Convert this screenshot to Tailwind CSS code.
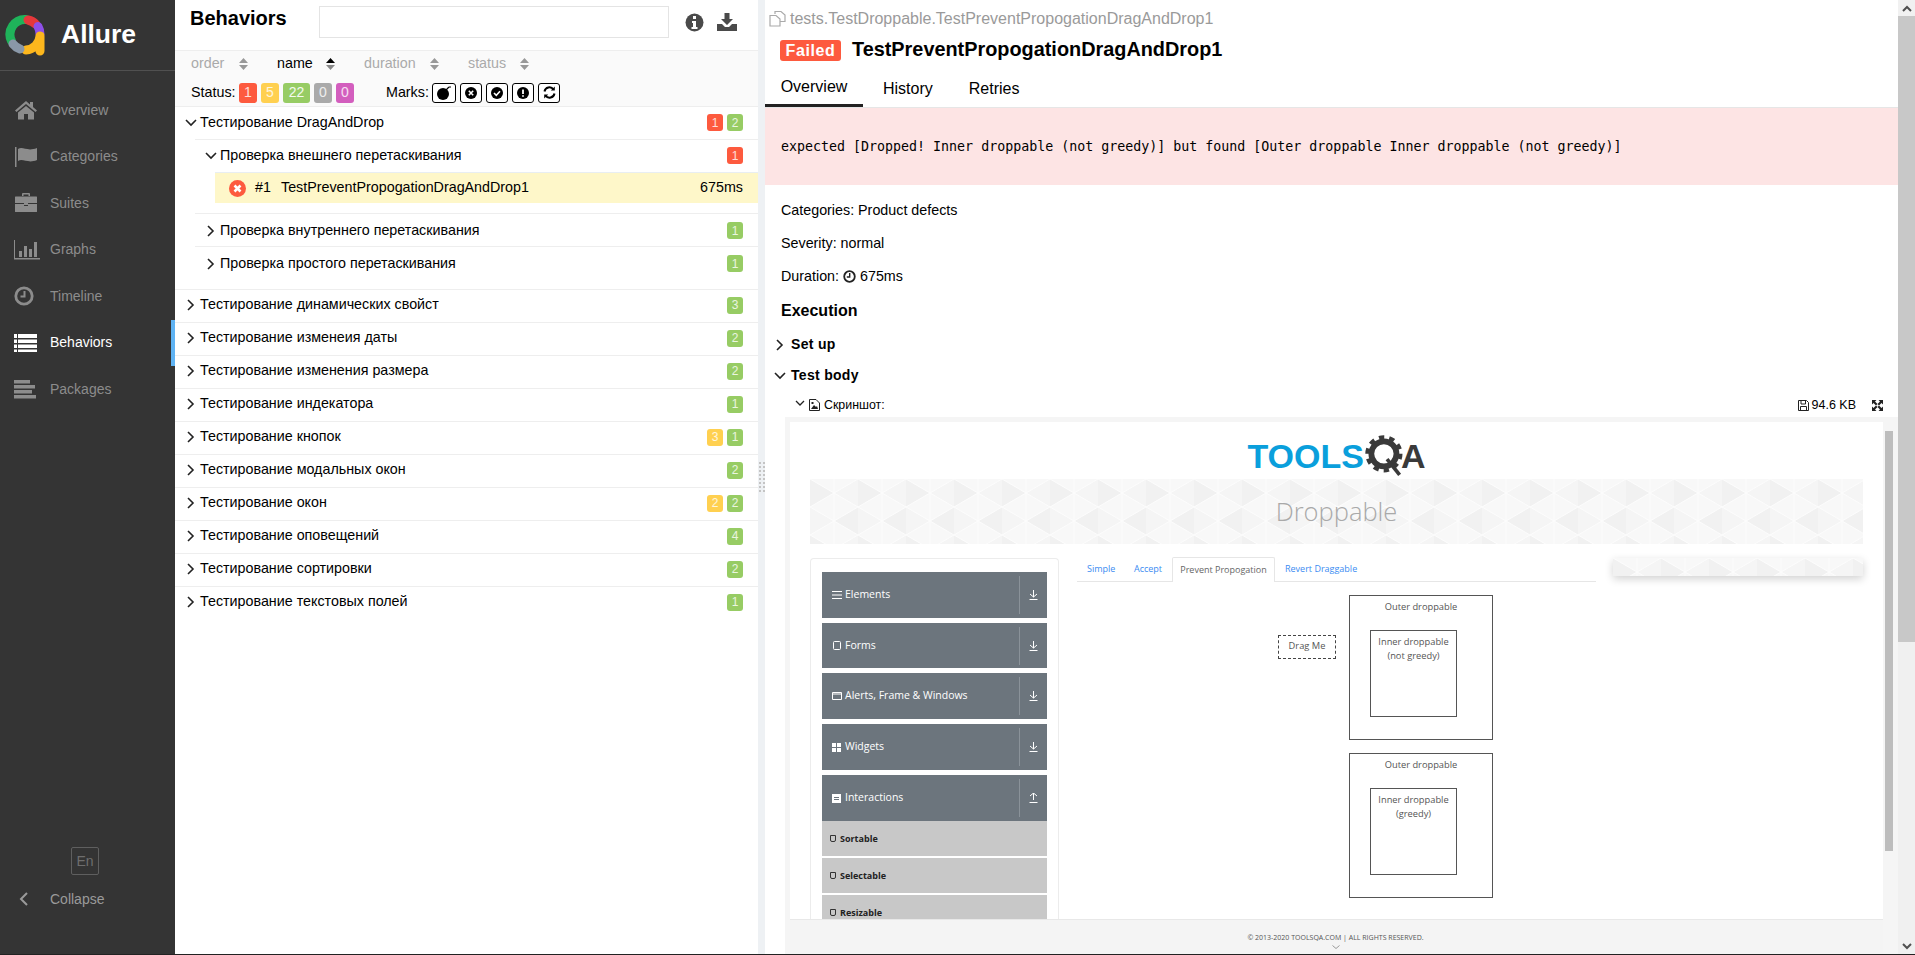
<!DOCTYPE html>
<html lang="en">

<head>
    <title>Allure Report - Behaviors</title>
    <meta charset="UTF-8">
    <meta name="viewport" content="width=device-width, initial-scale=1.0">
    <script src="https://cdn.jsdelivr.net/npm/@tailwindcss/browser@4"></script>
</head>

<body class="h-[955px] w-[1915px] overflow-hidden bg-white font-['Liberation_Sans',Arial,sans-serif] text-[14px] text-black">
    <div class="flex h-[954px]">

        <!-- side nav -->
        <nav class="flex h-full w-[175px] shrink-0 flex-col bg-[#343434]">
            <div class="flex h-[71px] shrink-0 items-center border-b border-[#505050] pl-[5px]">
                <svg width="40" height="42" viewBox="0 0 40 42" class="mt-[-1px]" fill="none" stroke-width="9" stroke-linecap="round">
                    <path d="M6.500 27 A15 15 0 0 1 21 5.500" stroke="#1fb35a"/>
                    <path d="M23 6 A15 15 0 0 1 31 10.500" stroke="#e5383b"/>
                    <path d="M33 12.500 A15 15 0 0 1 35 20" stroke="#8e4fe8"/>
                    <path d="M21 36 A15 15 0 0 0 35 22 L35 37" stroke="#fdb71d" stroke-linejoin="round"/>
                    <path d="M8 30 A15 15 0 0 0 15 35" stroke="#8a98a8"/>
                </svg>
                <span class="ml-[16px] text-[26.5px] font-bold text-white">Allure</span>
            </div>

            <ul class="mt-[16px] flex flex-col text-[14px] text-[#8c8c8c]">
                <li class="flex h-[46.5px] items-center">
                    <svg width="24" height="20" viewBox="0 0 24 20" class="ml-[14px]" fill="#8c8c8c"><path d="M12 1 L1 10.500 L2.500 12 L12 4 L21.500 12 L23 10.500 L19 7 V2 H16 V4.500 Z M4 12.500 V19.500 H10 V14 H14 V19.500 H20 V12.500 L12 6 Z"/></svg>
                    <span class="ml-[12px]">Overview</span>
                </li>
                <li class="flex h-[46.5px] items-center">
                    <svg width="24" height="20" viewBox="0 0 24 20" class="ml-[14px]" fill="#8c8c8c"><path d="M1 0 H2.500 V20 H1 Z M4 2 C9 -1 13 5 23 1 V13 C14 17 9 11 4 14 Z"/></svg>
                    <span class="ml-[12px]">Categories</span>
                </li>
                <li class="flex h-[46.5px] items-center">
                    <svg width="24" height="20" viewBox="0 0 24 20" class="ml-[14px]" fill="#8c8c8c"><path d="M8 3 V1 Q8 0 9 0 H15 Q16 0 16 1 V3 H14.500 V1.500 H9.500 V3 Z M1.500 3.500 H22.500 Q23 3.500 23 4 V10 H14 V12 H10 V10 H1 V4 Q1 3.500 1.500 3.500 Z M1 11 H10 V13 H14 V11 H23 V18.500 Q23 19 22.500 19 H1.500 Q1 19 1 18.500 Z"/></svg>
                    <span class="ml-[12px]">Suites</span>
                </li>
                <li class="flex h-[46.5px] items-center">
                    <svg width="26" height="20" viewBox="0 0 26 20" class="ml-[14px]" fill="#8c8c8c"><path d="M0 0 H1 V18 H26 V19.500 H0 Z M5 11 H8 V17 H5 Z M10 6 H13 V17 H10 Z M15 9 H18 V17 H15 Z M20 2 H23 V17 H20 Z"/></svg>
                    <span class="ml-[10px]">Graphs</span>
                </li>
                <li class="flex h-[46.5px] items-center">
                    <svg width="24" height="20" viewBox="0 0 24 20" class="ml-[13px]" fill="none" stroke="#8c8c8c"><circle cx="11" cy="10" r="8.200" stroke-width="2.800"/><path d="M11.500 5 V10.500 H7.500" stroke-width="2"/></svg>
                    <span class="ml-[13px]">Timeline</span>
                </li>
                <li class="flex h-[46.5px] items-center border-r-[4px] border-[#5fb3f3] text-white">
                    <svg width="24" height="20" viewBox="0 0 24 20" class="ml-[14px]" fill="#ffffff"><path d="M0 1 H3 V5 H0 Z M4 1 H23 V5 H4 Z M0 6.500 H3 V10 H0 Z M4 6.500 H23 V10 H4 Z M0 11.500 H3 V15 H0 Z M4 11.500 H23 V15 H4 Z M0 16.500 H3 V19 H0 Z M4 16.500 H23 V19 H4 Z"/></svg>
                    <span class="ml-[12px]">Behaviors</span>
                </li>
                <li class="flex h-[46.5px] items-center">
                    <svg width="24" height="20" viewBox="0 0 24 20" class="ml-[14px]" fill="#8c8c8c"><path d="M0 1 H16 V4.500 H0 Z M0 6 H21 V9.500 H0 Z M0 11 H18 V14.500 H0 Z M0 16 H22 V19.500 H0 Z"/></svg>
                    <span class="ml-[12px]">Packages</span>
                </li>
            </ul>

            <div class="mt-auto flex flex-col pb-[45px]">
                <div class="ml-[71px] flex h-[28px] w-[28px] items-center justify-center rounded-[2px] border border-[#5f5f5f] text-[14px] text-[#6e6e6e]">En</div>
                <div class="mt-[14px] flex h-[20px] items-center text-[14px] text-[#9a9a9a]">
                    <svg width="10" height="14" viewBox="0 0 10 14" class="ml-[19px]" fill="none" stroke="#9a9a9a" stroke-width="2"><path d="M8 1 L2 7 L8 13"/></svg>
                    <span class="ml-[21px]">Collapse</span>
                </div>
            </div>
        </nav>

        <!-- left pane: tree -->
        <section class="flex h-full w-[583px] shrink-0 flex-col">
            <div class="flex h-[51px] shrink-0 items-start border-b border-[#eeeeee] pl-[15px]">
                <h2 class="mt-[6px] w-[129px] text-[20px] font-bold leading-[24px]">Behaviors</h2>
                <div class="mt-[6px] h-[32px] w-[350px] border border-[#e4e4e4]"></div>
                <svg width="19" height="19" viewBox="0 0 19 19" class="ml-[16px] mt-[13px]"><circle cx="9.500" cy="9.500" r="9" fill="#4a4a4a"/><path d="M8 3 H11 V6 H8 Z M7 8 H11 V14 H12.500 V16 H6.500 V14 H8 V10 H7 Z" fill="#fff"/></svg>
                <svg width="20" height="19" viewBox="0 0 20 19" class="ml-[13px] mt-[13px]" fill="#4a4a4a"><path d="M7.500 0 H12.500 V6 H16 L10 12 L4 6 H7.500 Z M0 11 H5 L8 14 H12 L15 11 H20 V18 H0 Z"/></svg>
            </div>

            <div class="h-[56px] shrink-0 border-b border-[#eeeeee] bg-[#fafafa] pl-[16px] text-[14.3px]">
                <div class="flex h-[26px] items-center text-[#aaaaaa]">
                    <span class="w-[48px]">order</span>
                    <svg width="9" height="12" viewBox="0 0 9 12" class="mr-[29px]" fill="#999999"><path d="M4.500 0 L9 5 H0 Z M0 7 H9 L4.500 12 Z"/></svg>
                    <span class="w-[49px] text-black">name</span>
                    <svg width="9" height="12" viewBox="0 0 9 12" class="mr-[29px]"><path d="M4.500 0 L9 5 H0 Z" fill="#000"/><path d="M0 7 H9 L4.500 12 Z" fill="#888"/></svg>
                    <span class="w-[66px]">duration</span>
                    <svg width="9" height="12" viewBox="0 0 9 12" class="mr-[29px]" fill="#999999"><path d="M4.500 0 L9 5 H0 Z M0 7 H9 L4.500 12 Z"/></svg>
                    <span class="w-[52px]">status</span>
                    <svg width="9" height="12" viewBox="0 0 9 12" fill="#999999"><path d="M4.500 0 L9 5 H0 Z M0 7 H9 L4.500 12 Z"/></svg>
                </div>
                <div class="flex h-[29px] items-center pt-[2px]">
                    <span class="w-[48px]">Status:</span>
                    <span class="flex h-[20px] w-[18px] items-center justify-center rounded-[3px] bg-[#fd5a3e] text-[14px] text-white/80">1</span>
                    <span class="ml-[4px] flex h-[20px] w-[18px] items-center justify-center rounded-[3px] bg-[#ffd050] text-[14px] text-white/80">5</span>
                    <span class="ml-[4px] flex h-[20px] w-[27px] items-center justify-center rounded-[3px] bg-[#97cc64] text-[14px] text-white/90">22</span>
                    <span class="ml-[4px] flex h-[20px] w-[18px] items-center justify-center rounded-[3px] bg-[#aaaaaa] text-[14px] text-white/80">0</span>
                    <span class="ml-[4px] flex h-[20px] w-[18px] items-center justify-center rounded-[3px] bg-[#d35ebe] text-[14px] text-white/80">0</span>
                    <span class="ml-[32px] w-[46px]">Marks:</span>
                    <span class="flex h-[20px] w-[24px] items-center justify-center rounded-[3px] border border-black bg-white">
                        <svg width="16" height="15" viewBox="0 0 16 15"><circle cx="7" cy="9" r="6" fill="#000"/><path d="M10 5 L13 2 M13 2 H15" stroke="#000" stroke-width="1.200" fill="none"/></svg>
                    </span>
                    <span class="ml-[4px] flex h-[20px] w-[22px] items-center justify-center rounded-[3px] border border-black bg-white">
                        <svg width="12" height="12" viewBox="0 0 12 12"><circle cx="6" cy="6" r="6" fill="#000"/><path d="M3.800 3.800 L8.200 8.200 M8.200 3.800 L3.800 8.200" stroke="#fff" stroke-width="1.600"/></svg>
                    </span>
                    <span class="ml-[4px] flex h-[20px] w-[22px] items-center justify-center rounded-[3px] border border-black bg-white">
                        <svg width="12" height="12" viewBox="0 0 12 12"><circle cx="6" cy="6" r="6" fill="#000"/><path d="M3 6 L5.300 8.300 L9 4.300" stroke="#fff" stroke-width="1.600" fill="none"/></svg>
                    </span>
                    <span class="ml-[4px] flex h-[20px] w-[22px] items-center justify-center rounded-[3px] border border-black bg-white">
                        <svg width="12" height="12" viewBox="0 0 12 12"><circle cx="6" cy="6" r="6" fill="#000"/><path d="M6 2.500 V7 M6 8.200 V9.800" stroke="#fff" stroke-width="1.800"/></svg>
                    </span>
                    <span class="ml-[4px] flex h-[20px] w-[22px] items-center justify-center rounded-[3px] border border-black bg-white">
                        <svg width="13" height="13" viewBox="0 0 13 13" fill="none" stroke="#000" stroke-width="2"><path d="M1.500 5.500 A5 5 0 0 1 10.500 3.500 M11.500 7.500 A5 5 0 0 1 2.500 9.500"/><path d="M11.800 0.500 V4.500 H7.800 Z M1.200 12.500 V8.500 H5.200 Z" fill="#000" stroke="none"/></svg>
                    </span>
                </div>
            </div>

            <!-- tree rows -->
            <div class="flex flex-col text-[14.3px]">
                <div>
                    <div class="flex h-[32px] items-center pb-[1px] pr-[15px]">
                        <svg width="12" height="8" viewBox="0 0 12 8" class="ml-[10px]" fill="none" stroke="#222" stroke-width="1.600"><path d="M1 1 L6 6 L11 1"/></svg>
                        <span class="ml-[3px] flex-1">Тестирование DragAndDrop</span>
                        <span class="flex h-[17px] w-[16px] items-center justify-center rounded-[3px] bg-[#fd5a3e] text-[12px] text-white/80">1</span>
                        <span class="ml-[4px] flex h-[17px] w-[16px] items-center justify-center rounded-[3px] bg-[#97cc64] text-[12px] text-white/80">2</span>
                    </div>
                    <div class="ml-[20px] border-t border-[#eeeeee]">
                        <div class="flex h-[32px] items-center pb-[1px] pr-[15px]">
                            <svg width="12" height="8" viewBox="0 0 12 8" class="ml-[10px]" fill="none" stroke="#222" stroke-width="1.600"><path d="M1 1 L6 6 L11 1"/></svg>
                            <span class="ml-[3px] flex-1">Проверка внешнего перетаскивания</span>
                            <span class="flex h-[17px] w-[16px] items-center justify-center rounded-[3px] bg-[#fd5a3e] text-[12px] text-white/80">1</span>
                        </div>
                        <div class="ml-[20px] flex h-[31px] items-center border-t border-[#e8eef2] bg-[#fef7c9] pr-[15px]">
                            <svg width="17" height="17" viewBox="0 0 17 17" class="ml-[14px]"><circle cx="8.500" cy="8.500" r="8.500" fill="#fd5a3e"/><path d="M5.500 5.500 L11.500 11.500 M11.500 5.500 L5.500 11.500" stroke="#fff" stroke-width="2.600"/></svg>
                            <span class="ml-[9px] w-[26px]">#1</span>
                            <span class="flex-1">TestPreventPropogationDragAndDrop1</span>
                            <span>675ms</span>
                        </div>
                        <div class="h-[10px]"></div>
                        <div class="flex h-[33px] items-center border-t border-[#eeeeee] pr-[15px] pt-[1px]">
                            <svg width="8" height="12" viewBox="0 0 8 12" class="ml-[12px]" fill="none" stroke="#222" stroke-width="1.600"><path d="M1 1 L6 6 L1 11"/></svg>
                            <span class="ml-[5px] flex-1">Проверка внутреннего перетаскивания</span>
                            <span class="flex h-[17px] w-[16px] items-center justify-center rounded-[3px] bg-[#97cc64] text-[12px] text-white/80">1</span>
                        </div>
                        <div class="flex h-[33px] items-center border-t border-[#eeeeee] pr-[15px] pt-[1px]">
                            <svg width="8" height="12" viewBox="0 0 8 12" class="ml-[12px]" fill="none" stroke="#222" stroke-width="1.600"><path d="M1 1 L6 6 L1 11"/></svg>
                            <span class="ml-[5px] flex-1">Проверка простого перетаскивания</span>
                            <span class="flex h-[17px] w-[16px] items-center justify-center rounded-[3px] bg-[#97cc64] text-[12px] text-white/80">1</span>
                        </div>
                        <div class="h-[10px]"></div>
                    </div>
                </div>
                <div id="topRows"></div>
            </div>
        </section>

        <!-- splitter -->
        <div class="flex h-full w-[7px] shrink-0 items-start justify-center bg-[#eef1f4] pt-[462px]">
            <div class="grid grid-cols-2 gap-x-[2px] gap-y-[2px]">
                <i class="block size-[2px] bg-[#c4c4c4]"></i><i class="block size-[2px] bg-[#c4c4c4]"></i>
                <i class="block size-[2px] bg-[#c4c4c4]"></i><i class="block size-[2px] bg-[#c4c4c4]"></i>
                <i class="block size-[2px] bg-[#c4c4c4]"></i><i class="block size-[2px] bg-[#c4c4c4]"></i>
                <i class="block size-[2px] bg-[#c4c4c4]"></i><i class="block size-[2px] bg-[#c4c4c4]"></i>
                <i class="block size-[2px] bg-[#c4c4c4]"></i><i class="block size-[2px] bg-[#c4c4c4]"></i>
                <i class="block size-[2px] bg-[#c4c4c4]"></i><i class="block size-[2px] bg-[#c4c4c4]"></i>
                <i class="block size-[2px] bg-[#c4c4c4]"></i><i class="block size-[2px] bg-[#c4c4c4]"></i>
                <i class="block size-[2px] bg-[#c4c4c4]"></i><i class="block size-[2px] bg-[#c4c4c4]"></i>
            </div>
        </div>

        <!-- right pane: test result -->
        <main class="flex h-full min-w-0 flex-1 flex-col overflow-hidden">
            <div class="flex h-[36px] shrink-0 items-center pl-[4px] pt-[1px] text-[16px] text-[#9a9a9a]">
                <svg width="17" height="17" viewBox="0 0 17 17" fill="none" stroke="#aaaaaa" stroke-width="1.200"><path d="M6 4 V1.500 H12 L16 5 V11.500 H11"/><path d="M1 5.500 H7 L11 9 V16 H1 Z"/></svg>
                <span class="ml-[4px]">tests.TestDroppable.TestPreventPropogationDragAndDrop1</span>
            </div>
            <div class="flex h-[29px] shrink-0 items-center pl-[15px]">
                <span class="flex h-[21px] w-[61px] items-center justify-center rounded-[3px] bg-[#fd5a3e] text-[16px] font-bold tracking-[0.6px] text-white">Failed</span>
                <h1 class="mb-[2px] ml-[11px] text-[19.87px] font-bold">TestPreventPropogationDragAndDrop1</h1>
            </div>
            <div class="flex h-[43px] shrink-0 border-b border-[#e6e6e6] text-[16px]">
                <div class="flex h-[42px] w-[98px] items-center justify-center border-b-[3px] border-[#222] pt-[5px]">Overview</div>
                <div class="flex h-[42px] items-center pl-[20px] pt-[5px]">History</div>
                <div class="flex h-[42px] items-center pl-[36px] pt-[5px]">Retries</div>
            </div>
            <div class="flex h-[77px] shrink-0 items-center bg-[#fde4e4] pl-[16px] font-['DejaVu_Sans_Mono',monospace] text-[13.3px]">expected [Dropped! Inner droppable (not greedy)] but found [Outer droppable Inner droppable (not greedy)]</div>

            <div class="flex min-h-0 flex-1 flex-col text-[14.3px]">
                <div class="flex h-[34px] shrink-0 items-center pl-[16px] pt-[18px]">Categories: Product defects</div>
                <div class="mt-[16px] flex h-[17px] shrink-0 items-center pl-[16px]">Severity: normal</div>
                <div class="mt-[16px] flex h-[17px] shrink-0 items-center pl-[16px]">
                    Duration:
                    <svg width="13" height="13" viewBox="0 0 13 13" class="mx-[4px]" fill="none" stroke="#222"><circle cx="6.500" cy="6.500" r="5.300" stroke-width="1.800"/><path d="M6.700 3 V7 H3.800" stroke-width="1.400"/></svg>
                    675ms
                </div>
                <div class="mt-[16px] h-[20px] shrink-0 pl-[16px] text-[16px] font-bold leading-[20px]">Execution</div>
                <div class="mt-[13px] flex h-[20px] shrink-0 items-center text-[14px] font-bold">
                    <svg width="8" height="12" viewBox="0 0 8 12" class="ml-[11px] mt-[2px]" fill="none" stroke="#222" stroke-width="1.600"><path d="M1 1 L6 6 L1 11"/></svg>
                    <span class="ml-[7px] tracking-[0.3px]">Set up</span>
                </div>
                <div class="mt-[11px] flex h-[20px] shrink-0 items-center text-[14px] font-bold">
                    <svg width="12" height="8" viewBox="0 0 12 8" class="ml-[9px] mt-[1px]" fill="none" stroke="#222" stroke-width="1.600"><path d="M1 1 L6 6 L11 1"/></svg>
                    <span class="ml-[5px] tracking-[0.3px]">Test body</span>
                </div>
                <div class="mt-[12px] flex h-[16px] shrink-0 items-center pr-[15px] text-[12px]">
                    <svg width="10" height="7" viewBox="0 0 10 7" class="ml-[30px] mt-[-3px]" fill="none" stroke="#222" stroke-width="1.300"><path d="M1 1 L5 5 L9 1"/></svg>
                    <svg width="11" height="12" viewBox="0 0 11 12" class="ml-[4px]" fill="none" stroke="#222"><path d="M.5 .5 H7 L10.500 4 V11.500 H.5 Z"/><path d="M2 10 L5 6 L7 8 L8 7 L9 10 Z M2.500 3 H4.500 V5 H2.500 Z" fill="#222" stroke="none"/></svg>
                    <span class="ml-[3px] flex-1 pl-[1px] text-[12.4px]">Скриншот:</span>
                    <svg width="11" height="11" viewBox="0 0 11 11" fill="none" stroke="#222"><path d="M.5 .5 H8.500 L10.500 2.500 V10.500 H.5 Z M3 .5 V4 H7.500 V.5 M2.500 10.500 V6.500 H8.500 V10.500"/></svg>
                    <span class="ml-[3px] text-[12.5px]">94.6 KB</span>
                    <svg width="11" height="11" viewBox="0 0 11 11" class="ml-[16px]" fill="#222"><path d="M0 0 H4.500 L3 1.500 L5.500 4 L4 5.500 L1.500 3 L0 4.500 Z M11 0 V4.500 L9.500 3 L7 5.500 L5.500 4 L8 1.500 L6.500 0 Z M0 11 V6.500 L1.500 8 L4 5.500 L5.500 7 L3 9.500 L4.500 11 Z M11 11 H6.500 L8 9.500 L5.500 7 L7 5.500 L9.500 8 L11 6.500 Z"/></svg>
                </div>

                <!-- attachment: screenshot of demo page -->
                <div class="ml-[20px] mt-[4px] flex min-h-0 flex-1 bg-[#f5f5f5] pl-[5px] pt-[5px]">
                    <div class="flex min-w-0 flex-1 flex-col bg-white font-['Open_Sans',sans-serif] text-[10px] text-[#555]">
                        <div class="flex h-[57px] shrink-0 items-center justify-center pt-[10px] font-['Liberation_Sans',sans-serif]">
                            <span class="text-[34px] font-bold leading-none text-[#0a9fdc]">TOOLS</span>
                            <svg width="42" height="44" viewBox="0 0 40 42" class="ml-[1px] mt-[3px]"><circle cx="18" cy="18" r="12" fill="none" stroke="#3a3a3a" stroke-width="5.500"/><circle cx="18" cy="18" r="15.500" fill="none" stroke="#3a3a3a" stroke-width="4.500" stroke-dasharray="5 4.700"/><path d="M21 23 L33 38" stroke="#3a3a3a" stroke-width="3.500"/></svg>
                            <span class="ml-[-6px] text-[34px] font-bold leading-none text-[#3a3a3a]">A</span>
                        </div>
                        <div class="relative mx-[20px] flex h-[65px] shrink-0 items-center justify-center overflow-hidden bg-[#f8f8f8] text-[25.5px] font-light text-[#a9a9a9]">
                            <svg width="100%" height="65" class="absolute inset-0">
                                <defs>
                                    <pattern id="mosaic" width="48" height="56" patternUnits="userSpaceOnUse">
                                        <path d="M0 0 L24 14 L0 28 Z M48 28 L24 42 L48 56 Z" fill="#f1f1f1"/>
                                        <path d="M24 14 L48 0 V28 Z M24 42 L0 28 V56 Z" fill="#f5f5f5"/>
                                        <path d="M0 0 L48 28 M48 0 L0 28 M0 28 L48 56 M48 28 L0 56 M24 0 V56" stroke="#fcfcfc" stroke-width="1" fill="none"/>
                                    </pattern>
                                </defs>
                                <rect width="100%" height="65" fill="url(#mosaic)"/>
                            </svg>
                            <span class="relative">Droppable</span>
                        </div>
                        <div class="flex min-h-0 flex-1 overflow-hidden px-[20px] pt-[14px]">
                            <div class="flex w-[249px] shrink-0 flex-col gap-[5px] rounded-t-[4px] border border-b-0 border-[#ececec] px-[11px] pt-[13px] text-[10.5px] text-white">
                                <div class="flex h-[46px] shrink-0 items-center bg-[#6c757d] pl-[10px]">
                                    <svg width="10" height="8" viewBox="0 0 10 8" fill="#fff"><path d="M0 0 H10 V1 H0 Z M0 3.500 H10 V4.500 H0 Z M0 7 H10 V8 H0 Z"/></svg>
                                    <span class="ml-[3px] flex-1">Elements</span>
                                    <span class="h-[38px] w-px bg-[#8a9299]"></span>
                                    <svg width="9" height="10" viewBox="0 0 9 10" class="mx-[9px]" fill="none" stroke="#fff"><path d="M4.500 0 V7 M1 4 L4.500 7 L8 4 M0.500 9.500 H8.500"/></svg>
                                </div>
                                <div class="flex h-[45px] shrink-0 items-center bg-[#6c757d] pl-[11px]">
                                    <svg width="8" height="9" viewBox="0 0 8 9" fill="none" stroke="#fff"><rect x=".5" y=".5" width="7" height="8" rx="1"/></svg>
                                    <span class="ml-[4px] flex-1">Forms</span>
                                    <span class="h-[38px] w-px bg-[#8a9299]"></span>
                                    <svg width="9" height="10" viewBox="0 0 9 10" class="mx-[9px]" fill="none" stroke="#fff"><path d="M4.500 0 V7 M1 4 L4.500 7 L8 4 M0.500 9.500 H8.500"/></svg>
                                </div>
                                <div class="flex h-[46px] shrink-0 items-center bg-[#6c757d] pl-[10px]">
                                    <svg width="10" height="8" viewBox="0 0 10 8" fill="none" stroke="#fff"><path d="M.5 .5 H9.500 V7.500 H.5 Z M.5 2 H9.500"/></svg>
                                    <span class="ml-[3px] flex-1">Alerts, Frame &amp; Windows</span>
                                    <span class="h-[38px] w-px bg-[#8a9299]"></span>
                                    <svg width="9" height="10" viewBox="0 0 9 10" class="mx-[9px]" fill="none" stroke="#fff"><path d="M4.500 0 V7 M1 4 L4.500 7 L8 4 M0.500 9.500 H8.500"/></svg>
                                </div>
                                <div class="flex h-[46px] shrink-0 items-center bg-[#6c757d] pl-[10px]">
                                    <svg width="9" height="9" viewBox="0 0 9 9" fill="#fff"><path d="M0 0 H4 V4 H0 Z M5 0 H9 V4 H5 Z M0 5 H4 V9 H0 Z M5 5 H9 V9 H5 Z"/></svg>
                                    <span class="ml-[4px] flex-1">Widgets</span>
                                    <span class="h-[38px] w-px bg-[#8a9299]"></span>
                                    <svg width="9" height="10" viewBox="0 0 9 10" class="mx-[9px]" fill="none" stroke="#fff"><path d="M4.500 0 V7 M1 4 L4.500 7 L8 4 M0.500 9.500 H8.500"/></svg>
                                </div>
                                <div class="flex shrink-0 flex-col">
                                    <div class="flex h-[46px] shrink-0 items-center bg-[#6c757d] pl-[10px]">
                                        <svg width="9" height="9" viewBox="0 0 9 9"><path d="M0 0 H9 V9 H0 Z" fill="#fff"/><path d="M2 3.500 H7 M2 5.500 H7" stroke="#6c757d"/></svg>
                                        <span class="ml-[4px] flex-1">Interactions</span>
                                        <span class="h-[38px] w-px bg-[#8a9299]"></span>
                                        <svg width="9" height="10" viewBox="0 0 9 10" class="mx-[9px]" fill="none" stroke="#fff"><path d="M4.500 7 V0 M1 3 L4.500 0 L8 3 M0.500 9.500 H8.500"/></svg>
                                    </div>
                                    <div class="flex flex-col gap-[2px] text-[9px] font-bold text-[#222]">
                                        <div class="flex h-[35px] items-center bg-[#c8c8c8] pl-[8px]"><span class="mr-[4px] inline-block h-[7px] w-[6px] rounded-b-[2px] border border-[#333]"></span>Sortable</div>
                                        <div class="flex h-[35px] items-center bg-[#c8c8c8] pl-[8px]"><span class="mr-[4px] inline-block h-[7px] w-[6px] rounded-b-[2px] border border-[#333]"></span>Selectable</div>
                                        <div class="flex h-[35px] items-center bg-[#c8c8c8] pl-[8px]"><span class="mr-[4px] inline-block h-[7px] w-[6px] rounded-b-[2px] border border-[#333]"></span>Resizable</div>
                                    </div>
                                </div>
                            </div>

                            <div class="ml-[18px] flex w-[519px] shrink-0 flex-col">
                                <div class="flex h-[24px] shrink-0 items-end border-b border-[#e6e6e6] pl-[10px] text-[9px] text-[#3b8cf2]">
                                    <span class="flex h-[24px] w-[47px] items-center">Simple</span>
                                    <span class="flex h-[24px] w-[38px] items-center">Accept</span>
                                    <span class="mb-[-1px] flex h-[25px] w-[103px] items-center justify-center rounded-t-[2px] border border-b-0 border-[#e6e6e6] bg-white text-[#666]">Prevent Propogation</span>
                                    <span class="ml-[10px] flex h-[24px] items-center">Revert Draggable</span>
                                </div>
                                <div class="flex flex-1 flex-col pl-[272px] pt-[13px] text-center text-[9.3px] leading-[14px]">
                                    <div class="relative h-[145px] w-[144px] shrink-0 border border-[#555] pt-[4px]">
                                        Outer droppable
                                        <div class="absolute left-[-72px] top-[39px] flex h-[24px] w-[58px] items-start justify-center border border-dashed border-[#444] pt-[3px]">Drag Me</div>
                                        <div class="ml-[20px] mt-[16px] h-[87px] w-[87px] border border-[#555] pt-[4px]">Inner droppable<br>(not greedy)</div>
                                    </div>
                                    <div class="mt-[13px] h-[145px] w-[144px] shrink-0 border border-[#555] pt-[4px]">
                                        Outer droppable
                                        <div class="ml-[20px] mt-[16px] h-[87px] w-[87px] border border-[#555] pt-[4px]">Inner droppable<br>(greedy)</div>
                                    </div>
                                </div>
                            </div>

                            <div class="ml-[17px] h-[18px] w-[250px] shrink-0 overflow-hidden bg-[#f8f8f8] shadow-[0_3px_8px_rgba(0,0,0,0.18)]">
                                <svg width="250" height="18"><rect width="250" height="18" fill="url(#mosaic)"/></svg>
                            </div>
                        </div>
                        <div class="relative z-10 mt-auto flex h-[35px] shrink-0 flex-col items-center border-t border-[#e8e8e8] bg-[#f4f4f4] pr-[2px] pt-[13px] text-[7px] leading-[10px] text-[#555]">
                            <span>© 2013-2020 TOOLSQA.COM | ALL RIGHTS RESERVED.</span>
                            <svg width="8" height="4" viewBox="0 0 8 4" class="mt-[2px]" fill="none" stroke="#999"><path d="M.5 .5 L4 3.500 L7.500 .5"/></svg>
                        </div>
                    </div>
                    <!-- screenshot scrollbar -->
                    <div class="flex h-full w-[15px] shrink-0 flex-col bg-[#f5f5f5] pl-[1px] pr-[4px]">
                        <div class="h-[9px] shrink-0"></div>
                        <div class="ml-[1px] h-[420px] w-[8px] bg-[#bdbdbd]"></div>
                    </div>
                </div>
            </div>
        </main>

        <!-- page scrollbar -->
        <div class="flex h-full w-[17px] shrink-0 flex-col bg-[#f0f0f0]">
            <div class="flex h-[16px] shrink-0 items-center justify-center bg-[#f1f1f1]">
                <svg width="10" height="7" viewBox="0 0 10 7" fill="none" stroke="#505050" stroke-width="2"><path d="M1 6 L5 2 L9 6"/></svg>
            </div>
            <div class="h-[626px] shrink-0 bg-[#c8c8c8]"></div>
            <div class="mt-auto flex h-[16px] shrink-0 items-center justify-center">
                <svg width="10" height="7" viewBox="0 0 10 7" fill="none" stroke="#505050" stroke-width="2"><path d="M1 1 L5 5 L9 1"/></svg>
            </div>
        </div>
    </div>
    <div class="h-px w-full bg-[#222]"></div>

    <script>
        // top level groups of the behaviors tree
        const groups = [
            ['Тестирование динамических свойст', [['g', 3]]],
            ['Тестирование изменеия даты', [['g', 2]]],
            ['Тестирование изменения размера', [['g', 2]]],
            ['Тестирование индекатора', [['g', 1]]],
            ['Тестирование кнопок', [['y', 3], ['g', 1]]],
            ['Тестирование модальных окон', [['g', 2]]],
            ['Тестирование окон', [['y', 2], ['g', 2]]],
            ['Тестирование оповещений', [['g', 4]]],
            ['Тестирование сортировки', [['g', 2]]],
            ['Тестирование текстовых полей', [['g', 1]]],
        ];
        const topRows = document.getElementById('topRows');
        groups.forEach(group => {
            const badges = group[1].map(b => {
                const color = b[0] === 'g' ? 'bg-[#97cc64]' : 'bg-[#ffd050]';
                return `<span class="ml-[4px] flex h-[17px] w-[16px] items-center justify-center rounded-[3px] ${color} text-[12px] text-white/80">${b[1]}</span>`;
            }).join('');
            const row = document.createElement('div');
            row.className = 'flex h-[33px] items-center border-t border-[#eeeeee] pb-[2px] pr-[15px]';
            row.innerHTML = `
                <svg width="8" height="12" viewBox="0 0 8 12" class="ml-[12px]" fill="none" stroke="#222" stroke-width="1.600"><path d="M1 1 L6 6 L1 11"/></svg>
                <span class="ml-[5px] flex-1">${group[0]}</span>${badges}`;
            topRows.appendChild(row);
        });
    </script>
</body>

</html>
